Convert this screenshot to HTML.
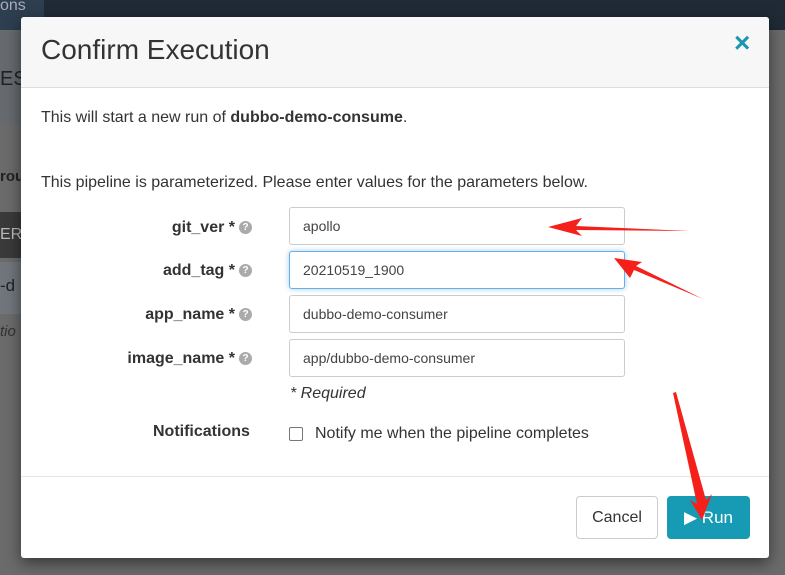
<!DOCTYPE html>
<html><head><style>
*{box-sizing:border-box;margin:0;padding:0}
body{width:785px;height:575px;overflow:hidden;background:#6b6b6b;font-family:"Liberation Sans",sans-serif;position:relative;color:#333}
.a{position:absolute}
.lbl{position:absolute;right:533px;font-weight:bold;font-size:16px;color:#333;white-space:nowrap}
.q{display:inline-block;width:13px;height:13px;border-radius:50%;background:#aaa;color:#fff;font-size:10px;text-align:center;line-height:13px;vertical-align:2px;margin-left:4px}
.in{position:absolute;left:289px;width:336px;height:38px;border:1px solid #ccc;border-radius:3px;font-size:14px;padding:10px 13px;color:#444;background:#fff}
</style></head><body>
<div class="a" style="left:0;top:0;width:785px;height:30px;background:#1f2a36"></div>
<div class="a" style="left:0;top:0;width:44px;height:30px;background:#2c3e50;color:#aab;font-size:16px;line-height:12px">ons</div>
<div class="a" style="left:0;top:30px;width:21px;height:95px;background:#666a6e;color:#222;font-size:20px;padding-top:38px">ES</div>
<div class="a" style="left:0;top:212px;width:21px;height:46px;background:#3a3a3a;color:#bbb;font-size:16px;padding-top:14px">ER</div>
<div class="a" style="left:0;top:262px;width:21px;height:52px;background:#70767c;color:#222;font-size:17px;padding-top:14px">-d</div>
<div class="a" style="left:0;top:168px;font-weight:bold;font-size:15px;color:#222">rou</div>
<div class="a" style="left:0;top:323px;font-style:italic;font-size:15px;color:#333">tio</div>

<div class="a" style="left:21px;top:17px;width:748px;height:541px;background:#fff;border-radius:3px;box-shadow:0 5px 15px rgba(0,0,0,.5);overflow:hidden">
 <div class="a" style="left:0;top:0;width:748px;height:71px;background:#f7f7f7;border-bottom:1px solid #ddd"></div>
 <div class="a" style="left:20px;top:17px;font-size:28px;color:#333">Confirm Execution</div>
 <div class="a" style="left:713px;top:10px;font-size:28px;font-weight:bold;color:#1797b0">×</div>
 <div class="a" style="left:20px;top:92px;font-size:16px">This will start a new run of <b>dubbo-demo-consume</b>.</div>
 <div class="a" style="left:20px;top:157px;font-size:16px">This pipeline is parameterized. Please enter values for the parameters below.</div>
</div>

<div class="lbl" style="top:219px">git_ver *<span class="q">?</span></div>
<div class="lbl" style="top:262px">add_tag *<span class="q">?</span></div>
<div class="lbl" style="top:306px">app_name *<span class="q">?</span></div>
<div class="lbl" style="top:350px">image_name *<span class="q">?</span></div>
<div class="in" style="top:207px">apollo</div>
<div class="in" style="top:251px;border-color:#66afe9;box-shadow:0 0 6px rgba(102,175,233,.6)">20210519_1900</div>
<div class="in" style="top:295px">dubbo-demo-consumer</div>
<div class="in" style="top:339px">app/dubbo-demo-consumer</div>
<div class="a" style="left:290px;top:385px;font-style:italic;font-size:16px">* Required</div>
<div class="a" style="left:153px;top:423px;font-weight:bold;font-size:16px">Notifications</div>
<div class="a" style="left:289px;top:427px;width:14px;height:14px;border:1px solid #777;border-radius:2px"></div>
<div class="a" style="left:315px;top:425px;font-size:16px">Notify me when the pipeline completes</div>
<div class="a" style="left:21px;top:476px;width:748px;height:1px;background:#e5e5e5"></div>
<div class="a" style="left:576px;top:496px;width:82px;height:43px;border:1px solid #ccc;border-radius:4px;font-size:16px;text-align:center;line-height:41px">Cancel</div>
<div class="a" style="left:667px;top:496px;width:83px;height:43px;background:#179bb4;border-radius:4px;font-size:17px;color:#fff;text-align:center;line-height:43px">▶ Run</div>

<svg class="a" style="left:0;top:0" width="785" height="575">
<g fill="#f5201a">
<polygon points="548,227 582,218 576,226 690,231 576,230 582,236"/>
<polygon points="614,258 642,262 636,266 703,299 634,270 630,278"/>
<polygon points="673,393 676,392 706,500 712,494 702,520 690,500 697,504"/>
</g>
</svg>
</body></html>
